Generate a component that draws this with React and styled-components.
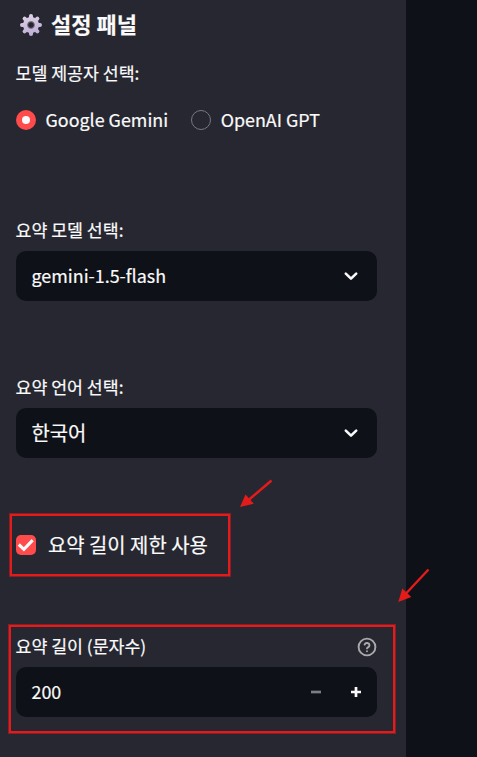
import React from "react";
import styled, { createGlobalStyle } from "styled-components";

const Global = createGlobalStyle`
  * { box-sizing: border-box; }
  body {
    margin: 0;
    background: #0e1117;
    color: #fafafa;
    font-family: "Noto Sans CJK KR", "Noto Sans", sans-serif;
    -webkit-text-stroke: 0.2px #fafafa;
  }
`;

const Page = styled.div`
  position: relative;
  width: 477px;
  height: 757px;
  overflow: hidden;
`;

const Sidebar = styled.aside`
  width: 406px;
  height: 757px;
  padding: 6px 29px 0 16px;
  background: #262730;
  display: flex;
  flex-direction: column;
`;

const Title = styled.h2`
  margin: 0;
  padding-left: 3px;
  height: 34px;
  display: flex;
  align-items: center;
  gap: 8px;
  font-size: 22px;
  font-weight: 700;
  line-height: 34px;
  white-space: nowrap;
`;

const Field = styled.section`
  margin-top: ${(p) => p.$top}px;
`;

const LabelRow = styled.div`
  display: flex;
  justify-content: space-between;
  align-items: center;
  height: 30px;
  font-size: 17.3px;
  line-height: 30px;
  white-space: nowrap;
`;

const LabelText = styled.span`
  height: 30px;
  margin-left: -0.5px;
  line-height: ${(p) => (p.$raised ? 28 : 30)}px;
`;

const Text = styled.span`
  height: 30px;
  font-size: ${(p) => p.$size || 17.9}px;
  line-height: ${(p) => (p.$size ? 30 : 28)}px;
  white-space: nowrap;
`;

const RadioGroup = styled.div`
  display: flex;
  gap: 23px;
  height: 30px;
  margin-top: 17px;
`;

const RadioOption = styled.label`
  display: flex;
  align-items: center;
  gap: 9.5px;
`;

const RadioMark = styled.span`
  width: 20px;
  height: 20px;
  border-radius: 50%;
  display: grid;
  place-items: center;
  border: ${(p) => (p.$checked ? "0" : "1px solid #777881")};
  background: ${(p) => (p.$checked ? "#ff4b4b" : "transparent")};

  &::after {
    content: "";
    width: 8px;
    height: 8px;
    border-radius: 50%;
    background: ${(p) => (p.$checked ? "#fafafa" : "transparent")};
  }
`;

const Control = styled.div`
  display: flex;
  align-items: center;
  justify-content: space-between;
  height: 50px;
  margin-top: 5px;
  padding: 0 ${(p) => p.$right || 16}px 0 15.5px;
  border-radius: 10px;
  background: #0e1117;
`;

const CheckRow = styled.label`
  display: flex;
  align-items: center;
  gap: 12px;
  height: 30px;
  margin-top: 72px;
`;

const CheckMark = styled.span`
  display: grid;
  place-items: center;
  width: 20px;
  height: 20px;
  border-radius: 5px;
  background: #ff4b4b;
`;

const Steppers = styled.div`
  display: flex;
  gap: 20px;
`;

const Icon = styled.svg`
  display: block;
  flex: none;
`;

const GearIcon = styled(Icon)`
  margin-top: 4px;
`;

const Highlight = styled.div`
  position: absolute;
  left: ${(p) => p.$x}px;
  top: ${(p) => p.$y}px;
  width: ${(p) => p.$w}px;
  height: ${(p) => p.$h}px;
  border: 2px solid #e41b1b;
  box-shadow: 0 0 0 1px rgba(228, 27, 27, 0.5);
`;

const Arrow = styled.svg`
  position: absolute;
  left: ${(p) => p.$x}px;
  top: ${(p) => p.$y}px;
`;

function Gear() {
  return (
    <GearIcon width="24" height="24" viewBox="0 0 24 24">
      <defs>
        <linearGradient id="metal" gradientUnits="userSpaceOnUse" x1="8" y1="1" x2="14" y2="23">
          <stop offset="0" stopColor="#ddd3e6" />
          <stop offset="1" stopColor="#bcacd4" />
        </linearGradient>
      </defs>
      <g stroke="url(#metal)" strokeWidth="4" strokeLinecap="round">
        <path d="M12 3 12.01 21M3 12 21 12.01M5.6 5.6 18.4 18.4M5.6 18.4 18.4 5.6" />
      </g>
      <circle cx="12" cy="12" r="8" fill="url(#metal)" />
      <circle cx="12" cy="12" r="3.4" fill="#262730" stroke="#83798c" strokeWidth="1" />
    </GearIcon>
  );
}

function Chevron() {
  return (
    <Icon width="20" height="20" viewBox="0 0 20 20">
      <path d="M4.8 7.6 10 12.6 15.2 7.6" fill="none" stroke="#fafafa" strokeWidth="2.6" strokeLinecap="round" strokeLinejoin="round" />
    </Icon>
  );
}

function Help() {
  return (
    <Icon width="20" height="20" viewBox="0 0 20 20" fill="none" stroke="#a9a9ac" strokeWidth="1.9" strokeLinecap="round" strokeLinejoin="round">
      <circle cx="10" cy="10" r="8.4" />
      <path d="M7.6 7.6a2.5 2.5 0 0 1 4.85.8c0 1.65-2.45 2.1-2.45 3M10 14.2v.1" />
    </Icon>
  );
}

function Select({ label, value, size, top }) {
  return (
    <Field $top={top}>
      <LabelRow><LabelText $raised>{label}</LabelText></LabelRow>
      <Control>
        <Text $size={size}>{value}</Text>
        <Chevron />
      </Control>
    </Field>
  );
}

export default function App() {
  return (
    <>
      <Global />
      <Page>
        <Sidebar>
          <Title><Gear />설정 패널</Title>
          <Field $top={18}>
            <LabelRow><LabelText>모델 제공자 선택:</LabelText></LabelRow>
            <RadioGroup>
              <RadioOption><RadioMark $checked /><Text>Google Gemini</Text></RadioOption>
              <RadioOption><RadioMark /><Text>OpenAI GPT</Text></RadioOption>
            </RadioGroup>
          </Field>
          <Select top={81} label="요약 모델 선택:" value="gemini-1.5-flash" />
          <Select top={72} label="요약 언어 선택:" value="한국어" size={19.9} />
          <CheckRow>
            <CheckMark>
              <Icon width="20" height="20" viewBox="0 0 20 20">
                <path d="M2.8 9.5 7.9 14.3 16.7 5.2" fill="none" stroke="#fafafa" strokeWidth="3.1" />
              </Icon>
            </CheckMark>
            <Text $size={19.9}>요약 길이 제한 사용</Text>
          </CheckRow>
          <Field $top={72}>
            <LabelRow><LabelText $raised>요약 길이 (문자수)</LabelText><Help /></LabelRow>
            <Control $right={11}>
              <Text>200</Text>
              <Steppers>
                <Icon width="20" height="20" viewBox="0 0 20 20"><path d="M5 10H15" stroke="#7c7d87" strokeWidth="2.7" /></Icon>
                <Icon width="20" height="20" viewBox="0 0 20 20"><path d="M5 10H15M10 5V15" stroke="#fafafa" strokeWidth="2.7" /></Icon>
              </Steppers>
            </Control>
          </Field>
        </Sidebar>
        <Highlight $x={10} $y={514} $w={220} $h={62} />
        <Highlight $x={9} $y={625} $w={386} $h={108} />
        <Arrow $x={236} $y={476} width="40" height="36" viewBox="236 476 40 36">
          <path d="M271.5 480.5 248 500.5" stroke="#e41b1b" strokeWidth="2.5" />
          <path d="M240 507 245.5 494.5 253.8 503.8Z" fill="#e41b1b" />
        </Arrow>
        <Arrow $x={394} $y={564} width="40" height="42" viewBox="394 564 40 42">
          <path d="M428.5 569.5 406 593.5" stroke="#e41b1b" strokeWidth="2.5" />
          <path d="M398.3 602 402.3 588.5 411.3 597Z" fill="#e41b1b" />
        </Arrow>
      </Page>
    </>
  );
}
